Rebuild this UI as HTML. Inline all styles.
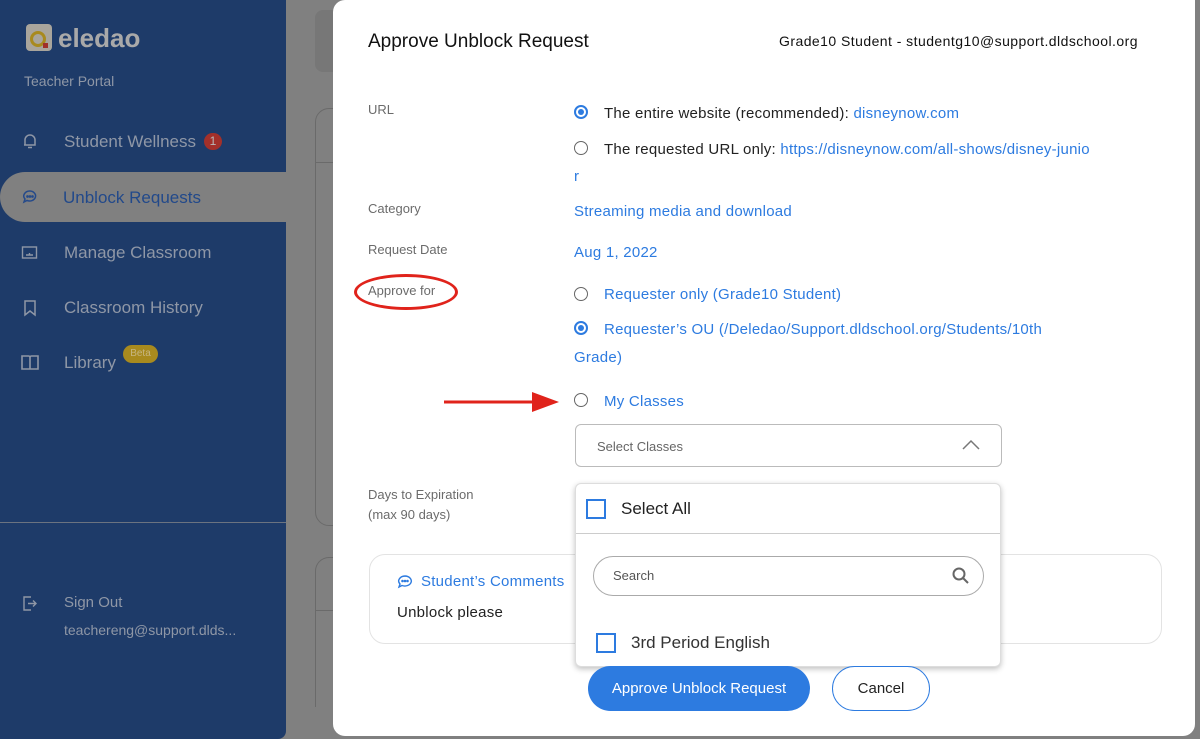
<!DOCTYPE html>
<html><head><meta charset="utf-8"><style>
*{box-sizing:border-box;margin:0;padding:0}
body{width:1200px;height:739px;overflow:hidden;background:#808080;font-family:"Liberation Sans",Arial,sans-serif;position:relative}
.sb{position:absolute;left:0;top:0;width:286px;height:739px;background:#1e3b69;border-bottom-right-radius:8px}
.t{position:absolute;white-space:nowrap}
.nav{color:#8f97a6;font-size:17px}
.ic{position:absolute;color:#8f97a6}
.modal{position:absolute;left:333px;top:0;width:862px;height:736px;background:#fff;border-radius:12px 0 12px 12px}
.lbl{color:#6b6b6b;font-size:13px}
.blue{color:#2d7be0;font-size:15px;letter-spacing:.25px}
.dark{color:#222;font-size:15px;letter-spacing:.25px}
.radio{position:absolute;width:14px;height:14px;border:1px solid #666;border-radius:50%}
.radio.on{border:2px solid #2d7be0}
.radio.on::after{content:"";position:absolute;left:2px;top:2px;width:6px;height:6px;border-radius:50%;background:#2d7be0}
.cb{position:absolute;width:20px;height:20px;border:2px solid #2d7be0}
</style></head><body>
<div class="sb"></div>
<div style="position:absolute;left:26px;top:24px;width:26px;height:27px;background:#a9a59c;border-radius:4px"></div>
<div style="position:absolute;left:30px;top:31px;width:16px;height:16px;border:3px solid #a88a1e;border-radius:50%"></div>
<div style="position:absolute;left:43px;top:43px;width:5px;height:5px;background:#a0302a"></div>
<div class="t" style="left:58px;top:23px;font-size:26px;color:#a9a9a9;font-weight:bold">eledao</div>
<div class="t" style="left:24px;top:73px;font-size:14px;color:#8f97a6">Teacher Portal</div>
<div style="position:absolute;left:0;top:172px;width:286px;height:50px;background:#808080;border-radius:25px 0 0 25px"></div>
<svg class="ic" style="left:21px;top:132px" width="18" height="18" viewBox="0 0 18 18" fill="none" stroke="#8f97a6" stroke-width="1.5"><path d="M4 13V8a5 5 0 0 1 10 0v5H3M7 15.5h4"/></svg>
<div class="t nav" style="left:64px;top:132px">Student Wellness</div>
<div style="position:absolute;left:204px;top:133px;width:18px;height:17px;border-radius:9px;background:#a3302a;color:#b9b9b9;font-size:12px;text-align:center;line-height:17px">1</div>
<svg class="ic" style="left:21px;top:188px" width="18" height="18" viewBox="0 0 18 18" fill="none" stroke="#254a8a" stroke-width="1.5"><path d="M9 3a6 5 0 1 1-3 9.5L3 14l1-3A6 5 0 0 1 9 3z"/><circle cx="6.5" cy="8.5" r=".6" fill="#254a8a"/><circle cx="9" cy="8.5" r=".6" fill="#254a8a"/><circle cx="11.5" cy="8.5" r=".6" fill="#254a8a"/></svg>
<div class="t" style="left:63px;top:188px;font-size:17px;color:#22498a">Unblock Requests</div>
<svg class="ic" style="left:21px;top:245px" width="18" height="16" viewBox="0 0 18 16" fill="none" stroke="#8f97a6" stroke-width="1.4"><rect x="1.5" y="2" width="14" height="11"/><path d="M5 10h7M8.5 8v2"/></svg>
<div class="t nav" style="left:64px;top:243px">Manage Classroom</div>
<svg class="ic" style="left:23px;top:299px" width="14" height="18" viewBox="0 0 14 18" fill="none" stroke="#8f97a6" stroke-width="1.5"><path d="M2 2h10v14l-5-4-5 4z"/></svg>
<div class="t nav" style="left:64px;top:298px">Classroom History</div>
<svg class="ic" style="left:20px;top:354px" width="20" height="17" viewBox="0 0 20 17" fill="none" stroke="#8f97a6" stroke-width="1.6"><path d="M2 2h6.5a1.5 1.5 0 0 1 1.5 1.5V15H2zM18 2h-6.5A1.5 1.5 0 0 0 10 3.5V15h8z"/></svg>
<div class="t nav" style="left:64px;top:353px">Library</div>
<div style="position:absolute;left:123px;top:345px;width:35px;height:18px;border-radius:9px;background:#a88a1e;color:#c6b682;font-size:10px;text-align:center;line-height:18px">Beta</div>
<div style="position:absolute;left:0;top:522px;width:286px;height:1px;background:#6b7380"></div>
<svg class="ic" style="left:22px;top:595px" width="16" height="17" viewBox="0 0 16 17" fill="none" stroke="#8f97a6" stroke-width="1.4"><path d="M9 2H2v13h7M6 8.5h8M11 5.5l3 3-3 3"/></svg>
<div class="t" style="left:64px;top:594px;font-size:15px;color:#8f97a6">Sign Out</div>
<div class="t" style="left:64px;top:622px;font-size:14px;color:#8f97a6">teachereng@support.dlds...</div>
<div style="position:absolute;left:315px;top:10px;width:30px;height:62px;background:#777;border-radius:8px"></div>
<div style="position:absolute;left:315px;top:108px;width:30px;height:418px;border:1px solid #6a6a6a;border-radius:14px 0 0 14px"></div>
<div style="position:absolute;left:316px;top:162px;width:20px;height:1px;background:#6a6a6a"></div>
<div style="position:absolute;left:315px;top:557px;width:30px;height:150px;border:1px solid #6a6a6a;border-bottom:none;border-radius:14px 0 0 0"></div>
<div style="position:absolute;left:316px;top:610px;width:20px;height:1px;background:#6a6a6a"></div>

<div class="modal"></div>
<div class="t" style="left:368px;top:31px;font-size:19px;color:#111">Approve Unblock Request</div>
<div class="t" style="left:779px;top:33px;font-size:14px;color:#111;letter-spacing:.45px">Grade10 Student - studentg10@support.dldschool.org</div>

<div class="t lbl" style="left:368px;top:102px">URL</div>
<div class="radio on" style="left:574px;top:105px"></div>
<div class="t dark" style="left:604px;top:105px">The entire website (recommended): <span style="color:#2d7be0">disneynow.com</span></div>
<div class="radio" style="left:574px;top:141px"></div>
<div class="t dark" style="left:604px;top:141px">The requested URL only: <span style="color:#2d7be0">https://disneynow.com/all-shows/disney-junio</span></div>
<div class="t blue" style="left:574px;top:168px">r</div>
<div class="t lbl" style="left:368px;top:201px">Category</div>
<div class="t blue" style="left:574px;top:203px">Streaming media and download</div>
<div class="t lbl" style="left:368px;top:242px">Request Date</div>
<div class="t blue" style="left:574px;top:244px">Aug 1, 2022</div>
<div class="t lbl" style="left:368px;top:283px">Approve for</div>
<div style="position:absolute;left:354px;top:274px;width:104px;height:36px;border:3px solid #e0231b;border-radius:50%"></div>
<div class="radio" style="left:574px;top:287px"></div>
<div class="t blue" style="left:604px;top:286px">Requester only (Grade10 Student)</div>
<div class="radio on" style="left:574px;top:321px"></div>
<div class="t blue" style="left:604px;top:321px">Requester’s OU (/Deledao/Support.dldschool.org/Students/10th</div>
<div class="t blue" style="left:574px;top:349px">Grade)</div>
<svg style="position:absolute;left:444px;top:389px" width="116" height="26"><path d="M0 13h90" stroke="#e0231b" stroke-width="3"/><path d="M88 3l27 10-27 10z" fill="#e0231b"/></svg>
<div class="radio" style="left:574px;top:393px"></div>
<div class="t blue" style="left:604px;top:393px">My Classes</div>
<div style="position:absolute;left:575px;top:424px;width:427px;height:43px;border:1px solid #bbb;border-radius:6px"></div>
<div class="t" style="left:597px;top:439px;font-size:13px;color:#666">Select Classes</div>
<svg style="position:absolute;left:961px;top:438px" width="20" height="12"><path d="M2 11l8-8 8 8" fill="none" stroke="#777" stroke-width="1.5"/></svg>
<div class="t lbl" style="left:368px;top:487px">Days to Expiration</div>
<div class="t lbl" style="left:368px;top:507px">(max 90 days)</div>

<div style="position:absolute;left:369px;top:554px;width:793px;height:90px;border:1px solid #e3e3e3;border-radius:16px"></div>
<svg style="position:absolute;left:397px;top:575px" width="16" height="14" viewBox="0 0 16 14" fill="none" stroke="#2d7be0" stroke-width="1.4"><path d="M8 1a6.5 5 0 1 1-3 9.5L2 12l1-3A6.5 5 0 0 1 8 1z"/><circle cx="5.5" cy="6" r=".6" fill="#2d7be0"/><circle cx="8" cy="6" r=".6" fill="#2d7be0"/><circle cx="10.5" cy="6" r=".6" fill="#2d7be0"/></svg>
<div class="t blue" style="left:421px;top:573px">Student’s Comments</div>
<div class="t dark" style="left:397px;top:604px">Unblock please</div>

<div style="position:absolute;left:575px;top:483px;width:426px;height:184px;background:#fff;border:1px solid #ddd;border-radius:6px;box-shadow:0 2px 6px rgba(0,0,0,.25)"></div>
<div class="cb" style="left:586px;top:499px"></div>
<div class="t" style="left:621px;top:499px;font-size:17px;color:#222">Select All</div>
<div style="position:absolute;left:576px;top:533px;width:424px;height:1px;background:#ccc"></div>
<div style="position:absolute;left:593px;top:556px;width:391px;height:40px;border:1px solid #aaa;border-radius:20px"></div>
<div class="t" style="left:613px;top:568px;font-size:13px;color:#555">Search</div>
<svg style="position:absolute;left:951px;top:566px" width="20" height="20" viewBox="0 0 20 20" fill="none" stroke="#666" stroke-width="2"><circle cx="8" cy="8" r="5.5"/><path d="M12 12l5 5"/></svg>
<div class="cb" style="left:596px;top:633px"></div>
<div class="t" style="left:631px;top:633px;font-size:17px;color:#333">3rd Period English</div>

<div style="position:absolute;left:588px;top:666px;width:222px;height:45px;border-radius:23px;background:#2d7be0;color:#fff;font-size:15px;text-align:center;line-height:45px">Approve Unblock Request</div>
<div style="position:absolute;left:832px;top:666px;width:98px;height:45px;border-radius:23px;border:1px solid #2d7be0;background:#fff;color:#222;font-size:15px;text-align:center;line-height:43px">Cancel</div>
</body></html>
